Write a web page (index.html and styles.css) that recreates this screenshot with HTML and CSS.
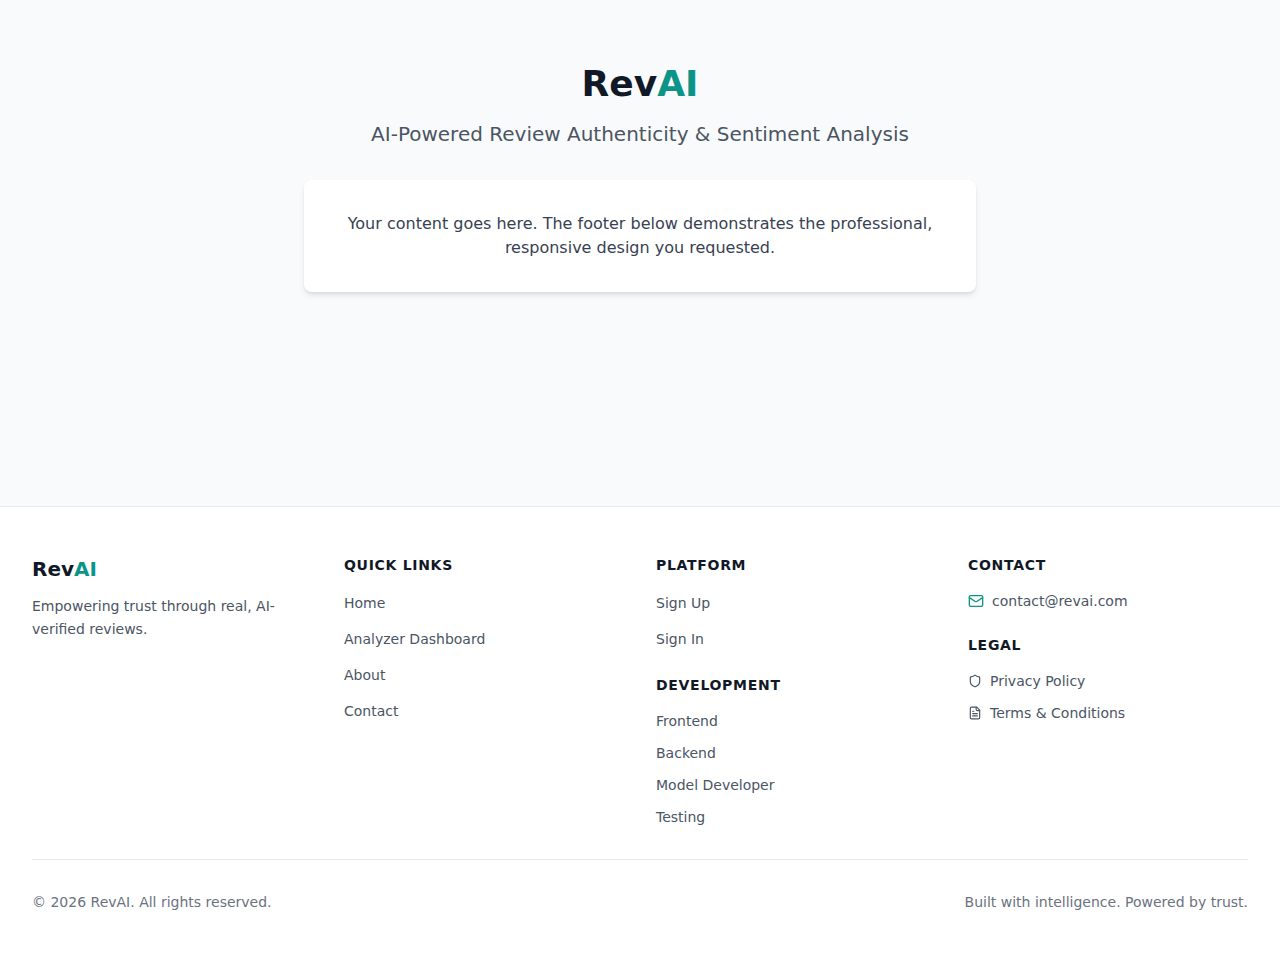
FILE: index.html
```html
<!DOCTYPE html>
<html lang="en">
<head>
<meta charset="utf-8">
<meta name="viewport" content="width=device-width, initial-scale=1">
<title>RevAI</title>
<link rel="stylesheet" href="styles.css">
</head>
<body>
<div class="page">
  <main class="main">
    <div class="hero">
      <h1 class="hero-title">Rev<span class="accent">AI</span></h1>
      <p class="hero-subtitle">AI-Powered Review Authenticity &amp; Sentiment Analysis</p>
      <div class="card">
        <p>Your content goes here. The footer below demonstrates the professional, responsive design you requested.</p>
      </div>
    </div>
  </main>
  <footer class="footer">
    <div class="footer-inner">
      <div class="columns">
        <div>
          <h2 class="brand">Rev<span class="accent">AI</span></h2>
          <p class="tagline">Empowering trust through real, AI-verified reviews.</p>
        </div>
        <nav>
          <h3 class="heading">Quick Links</h3>
          <ul class="links">
            <li><a href="#">Home</a></li>
            <li><a href="#">Analyzer Dashboard</a></li>
            <li><a href="#">About</a></li>
            <li><a href="#">Contact</a></li>
          </ul>
        </nav>
        <div class="stack">
          <section>
            <h3 class="heading">Platform</h3>
            <ul class="links">
              <li><a href="#">Sign Up</a></li>
              <li><a href="#">Sign In</a></li>
            </ul>
          </section>
          <section>
            <h3 class="heading">Development</h3>
            <ul class="items">
              <li>Frontend</li>
              <li>Backend</li>
              <li>Model Developer</li>
              <li>Testing</li>
            </ul>
          </section>
        </div>
        <div class="stack">
          <section>
            <h3 class="heading">Contact</h3>
            <a class="icon-link" href="mailto:contact@revai.com">
              <svg class="icon icon-mail" viewBox="0 0 24 24" aria-hidden="true"><rect width="20" height="16" x="2" y="4" rx="2"/><path d="m22 7-8.97 5.7a1.94 1.94 0 0 1-2.06 0L2 7"/></svg>
              contact@revai.com
            </a>
          </section>
          <section>
            <h3 class="heading">Legal</h3>
            <ul class="items">
              <li><a class="icon-link" href="#">
                <svg class="icon" viewBox="0 0 24 24" aria-hidden="true"><path d="M20 13c0 5-3.5 7.5-7.66 8.95a1 1 0 0 1-.67-.01C7.5 20.5 4 18 4 13V6a1 1 0 0 1 1-1c2 0 4.5-1.2 6.24-2.72a1.17 1.17 0 0 1 1.52 0C14.51 3.81 17 5 19 5a1 1 0 0 1 1 1z"/></svg>
                Privacy Policy
              </a></li>
              <li><a class="icon-link" href="#">
                <svg class="icon" viewBox="0 0 24 24" aria-hidden="true"><path d="M15 2H6a2 2 0 0 0-2 2v16a2 2 0 0 0 2 2h12a2 2 0 0 0 2-2V7Z"/><path d="M14 2v4a2 2 0 0 0 2 2h4"/><path d="M10 9H8"/><path d="M16 13H8"/><path d="M16 17H8"/></svg>
                Terms &amp; Conditions
              </a></li>
            </ul>
          </section>
        </div>
      </div>
      <div class="bottom">
        <p>© 2026 RevAI. All rights reserved.</p>
        <p>Built with intelligence. Powered by trust.</p>
      </div>
    </div>
  </footer>
</div>
</body>
</html>
```
FILE: styles.css
```css
*, *::before, *::after {
  box-sizing: border-box;
}

body, h1, h2, h3, p, ul {
  margin: 0;
  padding: 0;
}

body {
  background: #f9fafb;
  color: #4b5563;
  font-family: "DejaVu Sans", sans-serif;
  font-size: 16px;
  line-height: 24px;
}

ul {
  list-style: none;
}

a {
  color: inherit;
  text-decoration: none;
}

a:hover {
  color: #0d9488;
}

.page {
  display: flex;
  flex-direction: column;
  min-height: 100vh;
}

.accent {
  color: #0d9488;
}

.main {
  flex: 1;
  padding: 64px 16px;
}

.hero {
  max-width: 672px;
  margin: 0 auto;
  text-align: center;
}

.hero-title {
  margin-bottom: 16px;
  color: #111827;
  font-size: 36px;
  line-height: 40px;
}

.hero-subtitle {
  margin-bottom: 32px;
  font-size: 20px;
  line-height: 28px;
}

.card {
  padding: 32px;
  border-radius: 8px;
  background: #fff;
  box-shadow: 0 4px 6px -1px rgb(0 0 0 / 0.1), 0 2px 4px -2px rgb(0 0 0 / 0.1);
  color: #374151;
}

.footer {
  border-top: 1px solid #e5e7eb;
  background: #fff;
  font-size: 14px;
  line-height: 20px;
}

.footer-inner {
  max-width: 1280px;
  margin: 0 auto;
  padding: 48px 32px;
}

.columns {
  display: grid;
  grid-template-columns: repeat(auto-fit, minmax(220px, 1fr));
  gap: 32px;
}

.brand {
  margin-bottom: 12px;
  color: #111827;
  font-size: 20px;
  line-height: 28px;
}

.tagline {
  line-height: 23px;
}

.heading {
  margin-bottom: 16px;
  color: #111827;
  font-size: 14px;
  line-height: 20px;
  letter-spacing: 0.05em;
  text-transform: uppercase;
}

.links, .items {
  display: grid;
  gap: 12px;
}

.stack {
  display: grid;
  align-content: start;
  gap: 24px;
}

.links {
  line-height: 24px;
}

.icon-link {
  display: flex;
  align-items: center;
  gap: 8px;
}

.icon {
  flex: none;
  width: 14px;
  height: 14px;
  fill: none;
  stroke: currentColor;
  stroke-width: 2;
  stroke-linecap: round;
  stroke-linejoin: round;
}

.icon-mail {
  width: 16px;
  height: 16px;
  color: #0d9488;
}

.bottom {
  display: flex;
  flex-wrap: wrap;
  justify-content: space-between;
  gap: 16px;
  margin-top: 32px;
  padding-top: 32px;
  border-top: 1px solid #e5e7eb;
  color: #6b7280;
}
```
